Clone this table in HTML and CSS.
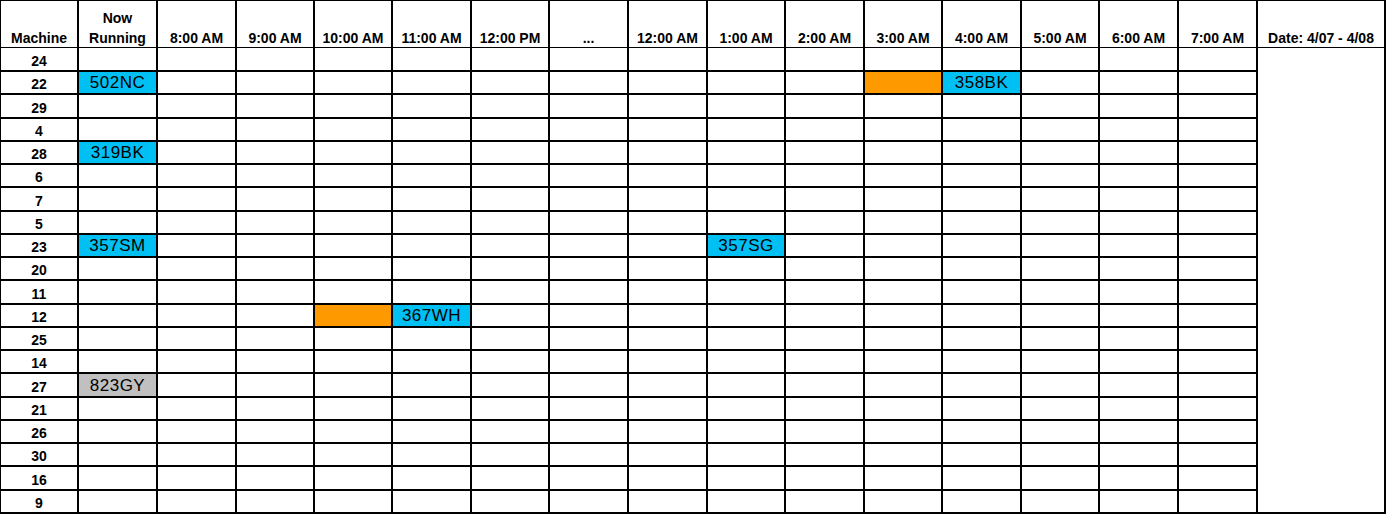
FILE: index.html
```html
<!DOCTYPE html>
<html>
<head>
<meta charset="utf-8">
<link rel="stylesheet" href="styles.css">
</head>
<body>
<div class="sheet">
  <div class="c hd"><span>Machine</span></div>
  <div class="c hd"><span>Now<br>Running</span></div>
  <div class="c hd"><span>8:00 AM</span></div>
  <div class="c hd"><span>9:00 AM</span></div>
  <div class="c hd"><span>10:00 AM</span></div>
  <div class="c hd"><span>11:00 AM</span></div>
  <div class="c hd"><span>12:00 PM</span></div>
  <div class="c hd"><span>...</span></div>
  <div class="c hd"><span>12:00 AM</span></div>
  <div class="c hd"><span>1:00 AM</span></div>
  <div class="c hd"><span>2:00 AM</span></div>
  <div class="c hd"><span>3:00 AM</span></div>
  <div class="c hd"><span>4:00 AM</span></div>
  <div class="c hd"><span>5:00 AM</span></div>
  <div class="c hd"><span>6:00 AM</span></div>
  <div class="c hd"><span>7:00 AM</span></div>
  <div class="c hd"><span>Date: 4/07 - 4/08</span></div>
  <div class="c date-body"></div>

  <!-- 24 -->
  <div class="c m">24</div><div class="c"></div><div class="c"></div><div class="c"></div><div class="c"></div><div class="c"></div><div class="c"></div><div class="c"></div><div class="c"></div><div class="c"></div><div class="c"></div><div class="c"></div><div class="c"></div><div class="c"></div><div class="c"></div><div class="c"></div>
  <!-- 22 -->
  <div class="c m">22</div><div class="c code blue">502NC</div><div class="c"></div><div class="c"></div><div class="c"></div><div class="c"></div><div class="c"></div><div class="c"></div><div class="c"></div><div class="c"></div><div class="c"></div><div class="c orange"></div><div class="c code blue">358BK</div><div class="c"></div><div class="c"></div><div class="c"></div>
  <!-- 29 -->
  <div class="c m">29</div><div class="c"></div><div class="c"></div><div class="c"></div><div class="c"></div><div class="c"></div><div class="c"></div><div class="c"></div><div class="c"></div><div class="c"></div><div class="c"></div><div class="c"></div><div class="c"></div><div class="c"></div><div class="c"></div><div class="c"></div>
  <!-- 4 -->
  <div class="c m">4</div><div class="c"></div><div class="c"></div><div class="c"></div><div class="c"></div><div class="c"></div><div class="c"></div><div class="c"></div><div class="c"></div><div class="c"></div><div class="c"></div><div class="c"></div><div class="c"></div><div class="c"></div><div class="c"></div><div class="c"></div>
  <!-- 28 -->
  <div class="c m">28</div><div class="c code blue">319BK</div><div class="c"></div><div class="c"></div><div class="c"></div><div class="c"></div><div class="c"></div><div class="c"></div><div class="c"></div><div class="c"></div><div class="c"></div><div class="c"></div><div class="c"></div><div class="c"></div><div class="c"></div><div class="c"></div>
  <!-- 6 -->
  <div class="c m">6</div><div class="c"></div><div class="c"></div><div class="c"></div><div class="c"></div><div class="c"></div><div class="c"></div><div class="c"></div><div class="c"></div><div class="c"></div><div class="c"></div><div class="c"></div><div class="c"></div><div class="c"></div><div class="c"></div><div class="c"></div>
  <!-- 7 -->
  <div class="c m">7</div><div class="c"></div><div class="c"></div><div class="c"></div><div class="c"></div><div class="c"></div><div class="c"></div><div class="c"></div><div class="c"></div><div class="c"></div><div class="c"></div><div class="c"></div><div class="c"></div><div class="c"></div><div class="c"></div><div class="c"></div>
  <!-- 5 -->
  <div class="c m">5</div><div class="c"></div><div class="c"></div><div class="c"></div><div class="c"></div><div class="c"></div><div class="c"></div><div class="c"></div><div class="c"></div><div class="c"></div><div class="c"></div><div class="c"></div><div class="c"></div><div class="c"></div><div class="c"></div><div class="c"></div>
  <!-- 23 -->
  <div class="c m">23</div><div class="c code blue">357SM</div><div class="c"></div><div class="c"></div><div class="c"></div><div class="c"></div><div class="c"></div><div class="c"></div><div class="c"></div><div class="c code blue">357SG</div><div class="c"></div><div class="c"></div><div class="c"></div><div class="c"></div><div class="c"></div><div class="c"></div>
  <!-- 20 -->
  <div class="c m">20</div><div class="c"></div><div class="c"></div><div class="c"></div><div class="c"></div><div class="c"></div><div class="c"></div><div class="c"></div><div class="c"></div><div class="c"></div><div class="c"></div><div class="c"></div><div class="c"></div><div class="c"></div><div class="c"></div><div class="c"></div>
  <!-- 11 -->
  <div class="c m">11</div><div class="c"></div><div class="c"></div><div class="c"></div><div class="c"></div><div class="c"></div><div class="c"></div><div class="c"></div><div class="c"></div><div class="c"></div><div class="c"></div><div class="c"></div><div class="c"></div><div class="c"></div><div class="c"></div><div class="c"></div>
  <!-- 12 -->
  <div class="c m">12</div><div class="c"></div><div class="c"></div><div class="c"></div><div class="c orange"></div><div class="c code blue">367WH</div><div class="c"></div><div class="c"></div><div class="c"></div><div class="c"></div><div class="c"></div><div class="c"></div><div class="c"></div><div class="c"></div><div class="c"></div><div class="c"></div>
  <!-- 25 -->
  <div class="c m">25</div><div class="c"></div><div class="c"></div><div class="c"></div><div class="c"></div><div class="c"></div><div class="c"></div><div class="c"></div><div class="c"></div><div class="c"></div><div class="c"></div><div class="c"></div><div class="c"></div><div class="c"></div><div class="c"></div><div class="c"></div>
  <!-- 14 -->
  <div class="c m">14</div><div class="c"></div><div class="c"></div><div class="c"></div><div class="c"></div><div class="c"></div><div class="c"></div><div class="c"></div><div class="c"></div><div class="c"></div><div class="c"></div><div class="c"></div><div class="c"></div><div class="c"></div><div class="c"></div><div class="c"></div>
  <!-- 27 -->
  <div class="c m">27</div><div class="c code gray">823GY</div><div class="c"></div><div class="c"></div><div class="c"></div><div class="c"></div><div class="c"></div><div class="c"></div><div class="c"></div><div class="c"></div><div class="c"></div><div class="c"></div><div class="c"></div><div class="c"></div><div class="c"></div><div class="c"></div>
  <!-- 21 -->
  <div class="c m">21</div><div class="c"></div><div class="c"></div><div class="c"></div><div class="c"></div><div class="c"></div><div class="c"></div><div class="c"></div><div class="c"></div><div class="c"></div><div class="c"></div><div class="c"></div><div class="c"></div><div class="c"></div><div class="c"></div><div class="c"></div>
  <!-- 26 -->
  <div class="c m">26</div><div class="c"></div><div class="c"></div><div class="c"></div><div class="c"></div><div class="c"></div><div class="c"></div><div class="c"></div><div class="c"></div><div class="c"></div><div class="c"></div><div class="c"></div><div class="c"></div><div class="c"></div><div class="c"></div><div class="c"></div>
  <!-- 30 -->
  <div class="c m">30</div><div class="c"></div><div class="c"></div><div class="c"></div><div class="c"></div><div class="c"></div><div class="c"></div><div class="c"></div><div class="c"></div><div class="c"></div><div class="c"></div><div class="c"></div><div class="c"></div><div class="c"></div><div class="c"></div><div class="c"></div>
  <!-- 16 -->
  <div class="c m">16</div><div class="c"></div><div class="c"></div><div class="c"></div><div class="c"></div><div class="c"></div><div class="c"></div><div class="c"></div><div class="c"></div><div class="c"></div><div class="c"></div><div class="c"></div><div class="c"></div><div class="c"></div><div class="c"></div><div class="c"></div>
  <!-- 9 -->
  <div class="c m">9</div><div class="c"></div><div class="c"></div><div class="c"></div><div class="c"></div><div class="c"></div><div class="c"></div><div class="c"></div><div class="c"></div><div class="c"></div><div class="c"></div><div class="c"></div><div class="c"></div><div class="c"></div><div class="c"></div><div class="c"></div>
</div>
</body>
</html>
```

FILE: styles.css
```css
html, body {
  margin: 0;
  padding: 0;
  background: #ffffff;
}

body {
  font-family: "Liberation Sans", Arial, sans-serif;
  color: #000000;
}

.sheet {
  display: grid;
  width: 1386px;
  box-sizing: border-box;
  border-left: 1px solid #000;
  border-top: 1px solid #000;
  grid-template-columns: 78px 79px 79px 78px 78px 79px 78px 79px 79px 78px 79px 78px 79px 78px 79px 79px 128px;
  grid-template-rows: 47px 24px 23px 24px 23px 23px 23px 24px 23px 23px 23px 24px 23px 23px 23px 24px 23px 23px 23px 24px 23px;
}

.c {
  box-sizing: border-box;
  border-right: 2px solid #000;
  border-bottom: 2px solid #000;
  display: flex;
  align-items: flex-end;
  justify-content: center;
  text-align: center;
  overflow: hidden;
}

.hd {
  border-bottom-width: 1px;
  font-weight: bold;
  font-size: 14px;
  line-height: 20px;
  overflow: visible;
}

.hd span {
  margin-bottom: -1px;
}

.date-body {
  grid-column: 17;
  grid-row: 2 / span 20;
}

.m {
  font-weight: bold;
  font-size: 14px;
  line-height: 16px;
  padding-bottom: 1px;
}

.code {
  font-size: 17px;
  letter-spacing: 0.5px;
  line-height: 19px;
  padding-bottom: 1px;
}

.blue {
  background: #00bff3;
}

.orange {
  background: #ff9900;
}

.gray {
  background: #c0c0c0;
}
```
